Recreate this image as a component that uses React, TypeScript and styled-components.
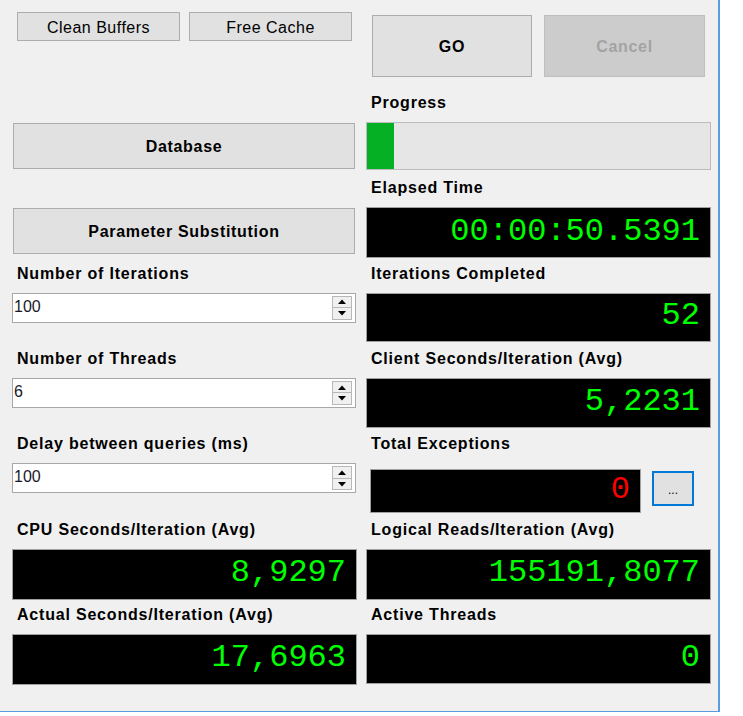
import React from 'react';
import styled, { createGlobalStyle } from 'styled-components';

const Global = createGlobalStyle`
  html, body { margin: 0; padding: 0; background: #ffffff; }
  body { font-family: "Liberation Sans", Arial, sans-serif; color: #000; }
  * { box-sizing: border-box; }
`;

const Panel = styled.div`
  width: 720px;
  height: 712px;
  background: #f0f0f0;
  border-right: 2px solid #5b9be0;
  border-bottom: 1px solid #5b9be0;
  padding-left: 12px;
  display: grid;
  grid-template-columns: 345px 345px;
  column-gap: 9px;
  grid-template-rows: 92px repeat(7, 85.33px);
`;

const TopLeft = styled.div`
  display: flex;
  gap: 9px;
  padding: 12px 0 0 5px;
  align-items: flex-start;
`;

const TopRight = styled.div`
  display: flex;
  gap: 12px;
  padding: 15px 0 0 6px;
  align-items: flex-start;
`;

const Button = styled.button<{ $w: number; $h: number; $bold?: boolean; $disabled?: boolean }>`
  width: ${(p) => p.$w}px;
  height: ${(p) => p.$h}px;
  margin: 0;
  padding: 0;
  background: ${(p) => (p.$disabled ? '#cccccc' : '#e1e1e1')};
  border: 1px solid ${(p) => (p.$disabled ? '#bfbfbf' : '#adadad')};
  color: ${(p) => (p.$disabled ? '#a3a3a3' : '#000')};
  font-family: "Liberation Sans", Arial, sans-serif;
  font-size: 16px;
  font-weight: ${(p) => (p.$bold ? 700 : 400)};
  letter-spacing: ${(p) => (p.$bold ? '0.7px' : '0.5px')};
  display: flex;
  align-items: center;
  justify-content: center;
  padding-top: 2px;
`;

const ButtonCell = styled.div`
  padding: 31px 0 0 1px;
`;

const Field = styled.div`
  display: flex;
  flex-direction: column;
`;

const Label = styled.div`
  height: 30px;
  line-height: 22px;
  padding-left: 5px;
  font-size: 16px;
  font-weight: 700;
  letter-spacing: 0.8px;
  white-space: nowrap;
`;

const Display = styled.div<{ $w?: number; $h?: number; $red?: boolean }>`
  width: ${(p) => p.$w ?? 345}px;
  height: ${(p) => p.$h ?? 50}px;
  background: #000;
  border: 1px solid #a0a0a0;
  color: ${(p) => (p.$red ? '#ff0000' : '#00ff00')};
  font-family: "Liberation Mono", "Courier New", monospace;
  font-weight: 400;
  font-size: 32px;
  display: flex;
  align-items: center;
  justify-content: flex-end;
  padding-right: 10px;
  padding-bottom: 3px;
`;

const Progress = styled.div`
  width: 345px;
  height: 48px;
  background: #e6e6e6;
  border: 1px solid #bcbcbc;
  display: flex;
`;

const ProgressFill = styled.div`
  height: 100%;
  background: #06b025;
`;

const ExRow = styled.div`
  display: flex;
  align-items: flex-start;
  padding: 6px 0 0 4px;
  gap: 11px;
`;

const DotsButton = styled.button`
  width: 42px;
  height: 35px;
  margin: 2px 0 0 0;
  padding: 2px 0 0 0;
  background: #e1e1e1;
  border: 2px solid #0078d7;
  font-family: "Liberation Sans", Arial, sans-serif;
  font-size: 12px;
  color: #000;
`;

const Spinner = styled.div`
  width: 344px;
  height: 30px;
  background: #fff;
  border: 1px solid #a8a8a8;
  display: flex;
  align-items: stretch;
`;

const SpinText = styled.div`
  flex: 1;
  padding-left: 1px;
  font-size: 16px;
  line-height: 26px;
  color: #1a1a2a;
`;

const SpinCol = styled.div`
  width: 20px;
  margin: 2px 3px 2px 0;
  display: flex;
  flex-direction: column;
  border: 1px solid #b8b8b8;
`;

const SpinBtn = styled.div<{ $down?: boolean }>`
  flex: 1;
  background: #f0f0f0;
  display: flex;
  align-items: center;
  justify-content: center;
  border-top: ${(p) => (p.$down ? '1px solid #b8b8b8' : 'none')};
`;

const Arrow = ({ down }: { down?: boolean }) => (
  <svg width="8" height="5" viewBox="0 0 8 5">
    <polygon points={down ? '0,0 8,0 4,4.5' : '0,5 8,5 4,0.5'} fill="#000" />
  </svg>
);

const NumInput = ({ value }: { value: string }) => (
  <Spinner>
    <SpinText>{value}</SpinText>
    <SpinCol>
      <SpinBtn>
        <Arrow />
      </SpinBtn>
      <SpinBtn $down>
        <Arrow down />
      </SpinBtn>
    </SpinCol>
  </Spinner>
);

export default function App() {
  const progress = 27;
  return (
    <>
      <Global />
      <Panel>
        <TopLeft>
          <Button $w={163} $h={29}>Clean Buffers</Button>
          <Button $w={163} $h={29}>Free Cache</Button>
        </TopLeft>
        <TopRight>
          <Button $w={160} $h={62} $bold>GO</Button>
          <Button $w={161} $h={62} $bold $disabled>Cancel</Button>
        </TopRight>

        <ButtonCell>
          <Button $w={342} $h={46} $bold>Database</Button>
        </ButtonCell>
        <Field>
          <Label>Progress</Label>
          <Progress>
            <ProgressFill style={{ width: progress }} />
          </Progress>
        </Field>

        <ButtonCell>
          <Button $w={342} $h={46} $bold>Parameter Substitution</Button>
        </ButtonCell>
        <Field>
          <Label>Elapsed Time</Label>
          <Display $h={51}>00:00:50.5391</Display>
        </Field>

        <Field>
          <Label>Number of Iterations</Label>
          <NumInput value="100" />
        </Field>
        <Field>
          <Label>Iterations Completed</Label>
          <Display $h={49}>52</Display>
        </Field>

        <Field>
          <Label>Number of Threads</Label>
          <NumInput value="6" />
        </Field>
        <Field>
          <Label>Client Seconds/Iteration (Avg)</Label>
          <Display>5,2231</Display>
        </Field>

        <Field>
          <Label>Delay between queries (ms)</Label>
          <NumInput value="100" />
        </Field>
        <Field>
          <Label>Total Exceptions</Label>
          <ExRow>
            <Display $w={271} $h={44} $red>0</Display>
            <DotsButton>...</DotsButton>
          </ExRow>
        </Field>

        <Field>
          <Label>CPU Seconds/Iteration (Avg)</Label>
          <Display $h={51}>8,9297</Display>
        </Field>
        <Field>
          <Label>Logical Reads/Iteration (Avg)</Label>
          <Display $h={51}>155191,8077</Display>
        </Field>

        <Field>
          <Label>Actual Seconds/Iteration (Avg)</Label>
          <Display $h={51}>17,6963</Display>
        </Field>
        <Field>
          <Label>Active Threads</Label>
          <Display>0</Display>
        </Field>
      </Panel>
    </>
  );
}
